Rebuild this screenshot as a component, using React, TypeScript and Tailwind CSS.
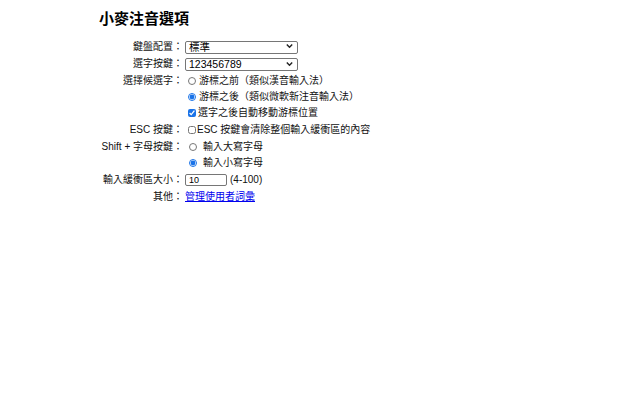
import React from "react";

function Chevron() {
  return (
    <svg className="pointer-events-none absolute right-[5px] top-1/2 -translate-y-1/2" width="7" height="5" viewBox="0 0 7 5">
      <path d="M0.8 0.9 L3.5 3.7 L6.2 0.9" fill="none" stroke="#222" strokeWidth="1.4" />
    </svg>
  );
}

function Picker({ value, options }: { value: string; options: string[] }) {
  return (
    <div className="relative w-[113px] h-[13px]">
      <select
        defaultValue={value}
        className="appearance-none w-full h-full border border-[#767676] rounded-[2px] bg-white pl-[3px] pr-[14px] text-[10.5px] leading-[11px] text-black"
      >
        {options.map((o) => (
          <option key={o}>{o}</option>
        ))}
      </select>
      <Chevron />
    </div>
  );
}

function Label({ children }: { children: React.ReactNode }) {
  return <div className="h-[16px] flex items-center justify-end whitespace-nowrap">{children}</div>;
}

export default function App() {
  return (
    <div
      className="min-h-[400px] bg-white text-[10px] text-[#111] pl-[99px]"
      style={{ fontFamily: '"Liberation Sans", "Noto Sans CJK TC", sans-serif' }}
    >
      <h1 className="pt-[9px] text-[15px] leading-[20px] font-bold text-black">小麥注音選項</h1>

      <div className="mt-[8.5px] grid grid-cols-[84px_1fr] gap-x-[2px] gap-y-[1px]">
        <div className="h-[17px] flex items-center justify-end whitespace-nowrap">鍵盤配置：</div>
        <div className="h-[17px] flex items-center">
          <Picker value="標準" options={["標準", "倚天", "許氏", "IBM", "精業", "倚天 26 鍵", "漢語拼音"]} />
        </div>

        <Label>選字按鍵：</Label>
        <div className="h-[16px] flex items-center">
          <Picker value="123456789" options={["123456789", "asdfghjkl", "asdfzxcvb"]} />
        </div>

        <div className="flex flex-col">
          <Label>選擇候選字：</Label>
        </div>
        <div className="flex flex-col">
          <label className="h-[16px] flex items-center whitespace-nowrap">
            <input type="radio" name="cursor" className="ml-[3px] mr-[3px] w-[8px] h-[8px] m-0 accent-[#1a73e8]" />
            游標之前（類似漢音輸入法）
          </label>
          <label className="h-[16px] flex items-center whitespace-nowrap">
            <input type="radio" name="cursor" defaultChecked className="ml-[3px] mr-[3px] w-[8px] h-[8px] m-0 accent-[#1a73e8]" />
            游標之後（類似微軟新注音輸入法）
          </label>
          <label className="h-[16px] flex items-center whitespace-nowrap">
            <input type="checkbox" defaultChecked className="ml-[3px] mr-[2px] w-[8px] h-[8px] m-0 accent-[#1a73e8]" />
            選字之後自動移動游標位置
          </label>
        </div>

        <Label>ESC 按鍵：</Label>
        <label className="h-[16px] flex items-center whitespace-nowrap">
          <input type="checkbox" className="ml-[3px] mr-[1px] w-[8px] h-[8px] m-0" />
          ESC 按鍵會清除整個輸入緩衝區的內容
        </label>

        <div className="flex flex-col">
          <Label>Shift + 字母按鍵：</Label>
        </div>
        <div className="flex flex-col">
          <label className="h-[16px] flex items-center whitespace-nowrap">
            <input type="radio" name="shift" className="ml-[4px] mr-[6px] w-[8px] h-[8px] m-0 accent-[#1a73e8]" />
            輸入大寫字母
          </label>
          <label className="h-[16px] flex items-center whitespace-nowrap">
            <input type="radio" name="shift" defaultChecked className="ml-[4px] mr-[6px] w-[8px] h-[8px] m-0 accent-[#1a73e8]" />
            輸入小寫字母
          </label>
        </div>

        <Label>輸入緩衝區大小：</Label>
        <div className="h-[16px] flex items-center whitespace-nowrap">
          <input
            type="text"
            defaultValue="10"
            className="w-[42px] h-[12px] border border-[#767676] rounded-[2px] px-[3px] text-[9px] leading-[10px] text-black bg-white"
          />
          <span className="ml-[3px]">(4-100)</span>
        </div>

        <Label>其他：</Label>
        <div className="h-[16px] flex items-center">
          <a href="#" className="text-[#0000ee] underline">管理使用者詞彙</a>
        </div>
      </div>
    </div>
  );
}
